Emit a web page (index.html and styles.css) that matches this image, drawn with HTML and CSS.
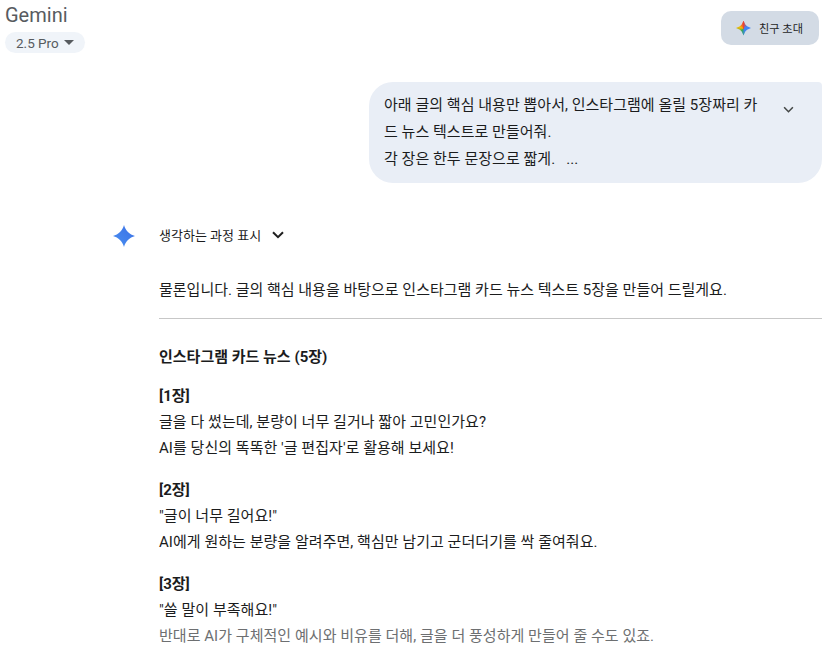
FILE: index.html
```html
<!DOCTYPE html>
<html lang="ko">
<head>
  <meta charset="UTF-8">
  <meta name="viewport" content="width=device-width, initial-scale=1.0">
  <title>Gemini</title>
  <link rel="stylesheet" href="styles.css">
</head>
<body>
  <header class="topbar">
    <div class="brand">
      <div class="brand-name">Gemini</div>
      <button class="model-chip">2.5 Pro <span class="caret"></span></button>
    </div>
    <button class="invite">
      <span class="invite-icon"></span>
      친구 초대
    </button>
  </header>

  <main class="chat">
    <section class="user-row">
      <div class="bubble">
        <p class="bubble-text">아래 글의 핵심 내용만 뽑아서, 인스타그램에 올릴 5장짜리 카드 뉴스 텍스트로 만들어줘.<br>각 장은 한두 문장으로 짧게. &nbsp; ...</p>
        <svg class="bubble-chevron" viewBox="0 0 12 8" width="11" height="7"><path d="M1 1.5l5 5 5-5" fill="none" stroke="#444746" stroke-width="1.8"/></svg>
      </div>
    </section>

    <section class="reply">
      <div class="thinking">
        <svg class="spark" viewBox="0 0 24 24" width="24" height="24">
          <defs>
            <linearGradient id="sparkGrad" x1="0" y1="1" x2="1" y2="0">
              <stop offset="0" stop-color="#4a90f0"/>
              <stop offset="1" stop-color="#3a6fe6"/>
            </linearGradient>
          </defs>
          <path d="M12 1C13.4 6.5 17.5 10.6 23 12 17.5 13.4 13.4 17.5 12 23 10.6 17.5 6.5 13.4 1 12 6.5 10.6 10.6 6.5 12 1Z" fill="url(#sparkGrad)"/>
        </svg>
        <span class="thinking-label">생각하는 과정 표시</span>
        <svg class="thinking-chevron" viewBox="0 0 12 8" width="12" height="8"><path d="M1 1.2l5 5 5-5" fill="none" stroke="#1f1f1f" stroke-width="2"/></svg>
      </div>

      <div class="reply-body">
        <p class="intro">물론입니다. 글의 핵심 내용을 바탕으로 인스타그램 카드 뉴스 텍스트 5장을 만들어 드릴게요.</p>
        <hr class="divider">
        <h2 class="title">인스타그램 카드 뉴스 (5장)</h2>

        <div class="card">
          <strong>[1장]</strong>
          <p>글을 다 썼는데, 분량이 너무 길거나 짧아 고민인가요?</p>
          <p>AI를 당신의 똑똑한 '글 편집자'로 활용해 보세요!</p>
        </div>
        <div class="card">
          <strong>[2장]</strong>
          <p>"글이 너무 길어요!"</p>
          <p>AI에게 원하는 분량을 알려주면, 핵심만 남기고 군더더기를 싹 줄여줘요.</p>
        </div>
        <div class="card">
          <strong>[3장]</strong>
          <p>"쓸 말이 부족해요!"</p>
          <p class="faded">반대로 AI가 구체적인 예시와 비유를 더해, 글을 더 풍성하게 만들어 줄 수도 있죠.</p>
        </div>
      </div>
    </section>
  </main>
</body>
</html>
```

FILE: styles.css
```css
* {
  box-sizing: border-box;
  margin: 0;
  padding: 0;
}

html, body {
  height: 655px;
  overflow: hidden;
}

body {
  font-family: Roboto, "Noto Sans CJK KR", sans-serif;
  background: #fff;
  color: #1b1c1d;
}

button {
  font-family: inherit;
  border: none;
}

/* Top bar */
.topbar {
  display: flex;
  justify-content: space-between;
  align-items: flex-start;
  padding: 3px 14px 0 5px;
  height: 82px;
}

.brand-name {
  font-size: 20px;
  line-height: 25px;
  color: #575b5f;
}

.model-chip {
  display: flex;
  align-items: center;
  gap: 5px;
  height: 21px;
  width: 80px;
  margin-top: 4px;
  padding-left: 11px;
  border-radius: 11px;
  background: #f0f4f9;
  color: #575b5f;
  font-size: 13.5px;
}

.caret {
  width: 0;
  height: 0;
  border-left: 5px solid transparent;
  border-right: 5px solid transparent;
  border-top: 5px solid #575b5f;
}

.invite {
  display: flex;
  align-items: center;
  gap: 8px;
  width: 98px;
  height: 34px;
  margin-top: 8px;
  padding-left: 15px;
  border-radius: 10px;
  background: #d3dbe5;
  color: #1f1f1f;
  font-size: 11.2px;
}

.invite-icon {
  width: 15px;
  height: 15px;
  background: conic-gradient(#ea4335 0deg, #4285f4 60deg, #4285f4 150deg, #34a853 215deg, #fbbc04 290deg, #ea4335 360deg);
  clip-path: polygon(50% 0, 62% 26%, 74% 38%, 100% 50%, 74% 62%, 62% 74%, 50% 100%, 38% 74%, 26% 62%, 0 50%, 26% 38%, 38% 26%);
}

/* User message */
.user-row {
  display: flex;
  justify-content: flex-end;
  padding-right: 11px;
}

.bubble {
  display: flex;
  width: 453px;
  height: 101px;
  padding: 10px 14px 10px 15px;
  border-radius: 24px;
  border-top-right-radius: 4px;
  background: #e9eef6;
}

.bubble-text {
  width: 380px;
  font-size: 15px;
  line-height: 27px;
  letter-spacing: 0.03px;
  word-break: break-all;
}

.bubble-chevron {
  flex: none;
  margin: 14px 0 0 19px;
}

/* Model reply */
.reply {
  margin-top: 39px;
  padding-left: 112px;
  padding-right: 11px;
}

.thinking {
  display: flex;
  align-items: center;
  height: 28px;
}

.thinking-label {
  margin-left: 23px;
  padding-bottom: 3px;
  font-size: 13px;
}

.thinking-chevron {
  margin-left: 11px;
  margin-bottom: 2px;
}

.reply-body {
  padding: 0 0 0 47px;
  font-size: 15px;
  line-height: 26px;
}

.intro {
  margin-top: 27px;
}

.divider {
  border: none;
  border-top: 1px solid #c7c7c7;
  margin: 15px 0 25px;
}

.title {
  font-size: 15px;
  font-weight: 700;
  margin-bottom: 13px;
}

.card {
  margin-bottom: 16px;
}

.card strong {
  display: block;
}

.card p {
  letter-spacing: 0.04px;
}

.faded {
  color: #6d6f71;
}
```
